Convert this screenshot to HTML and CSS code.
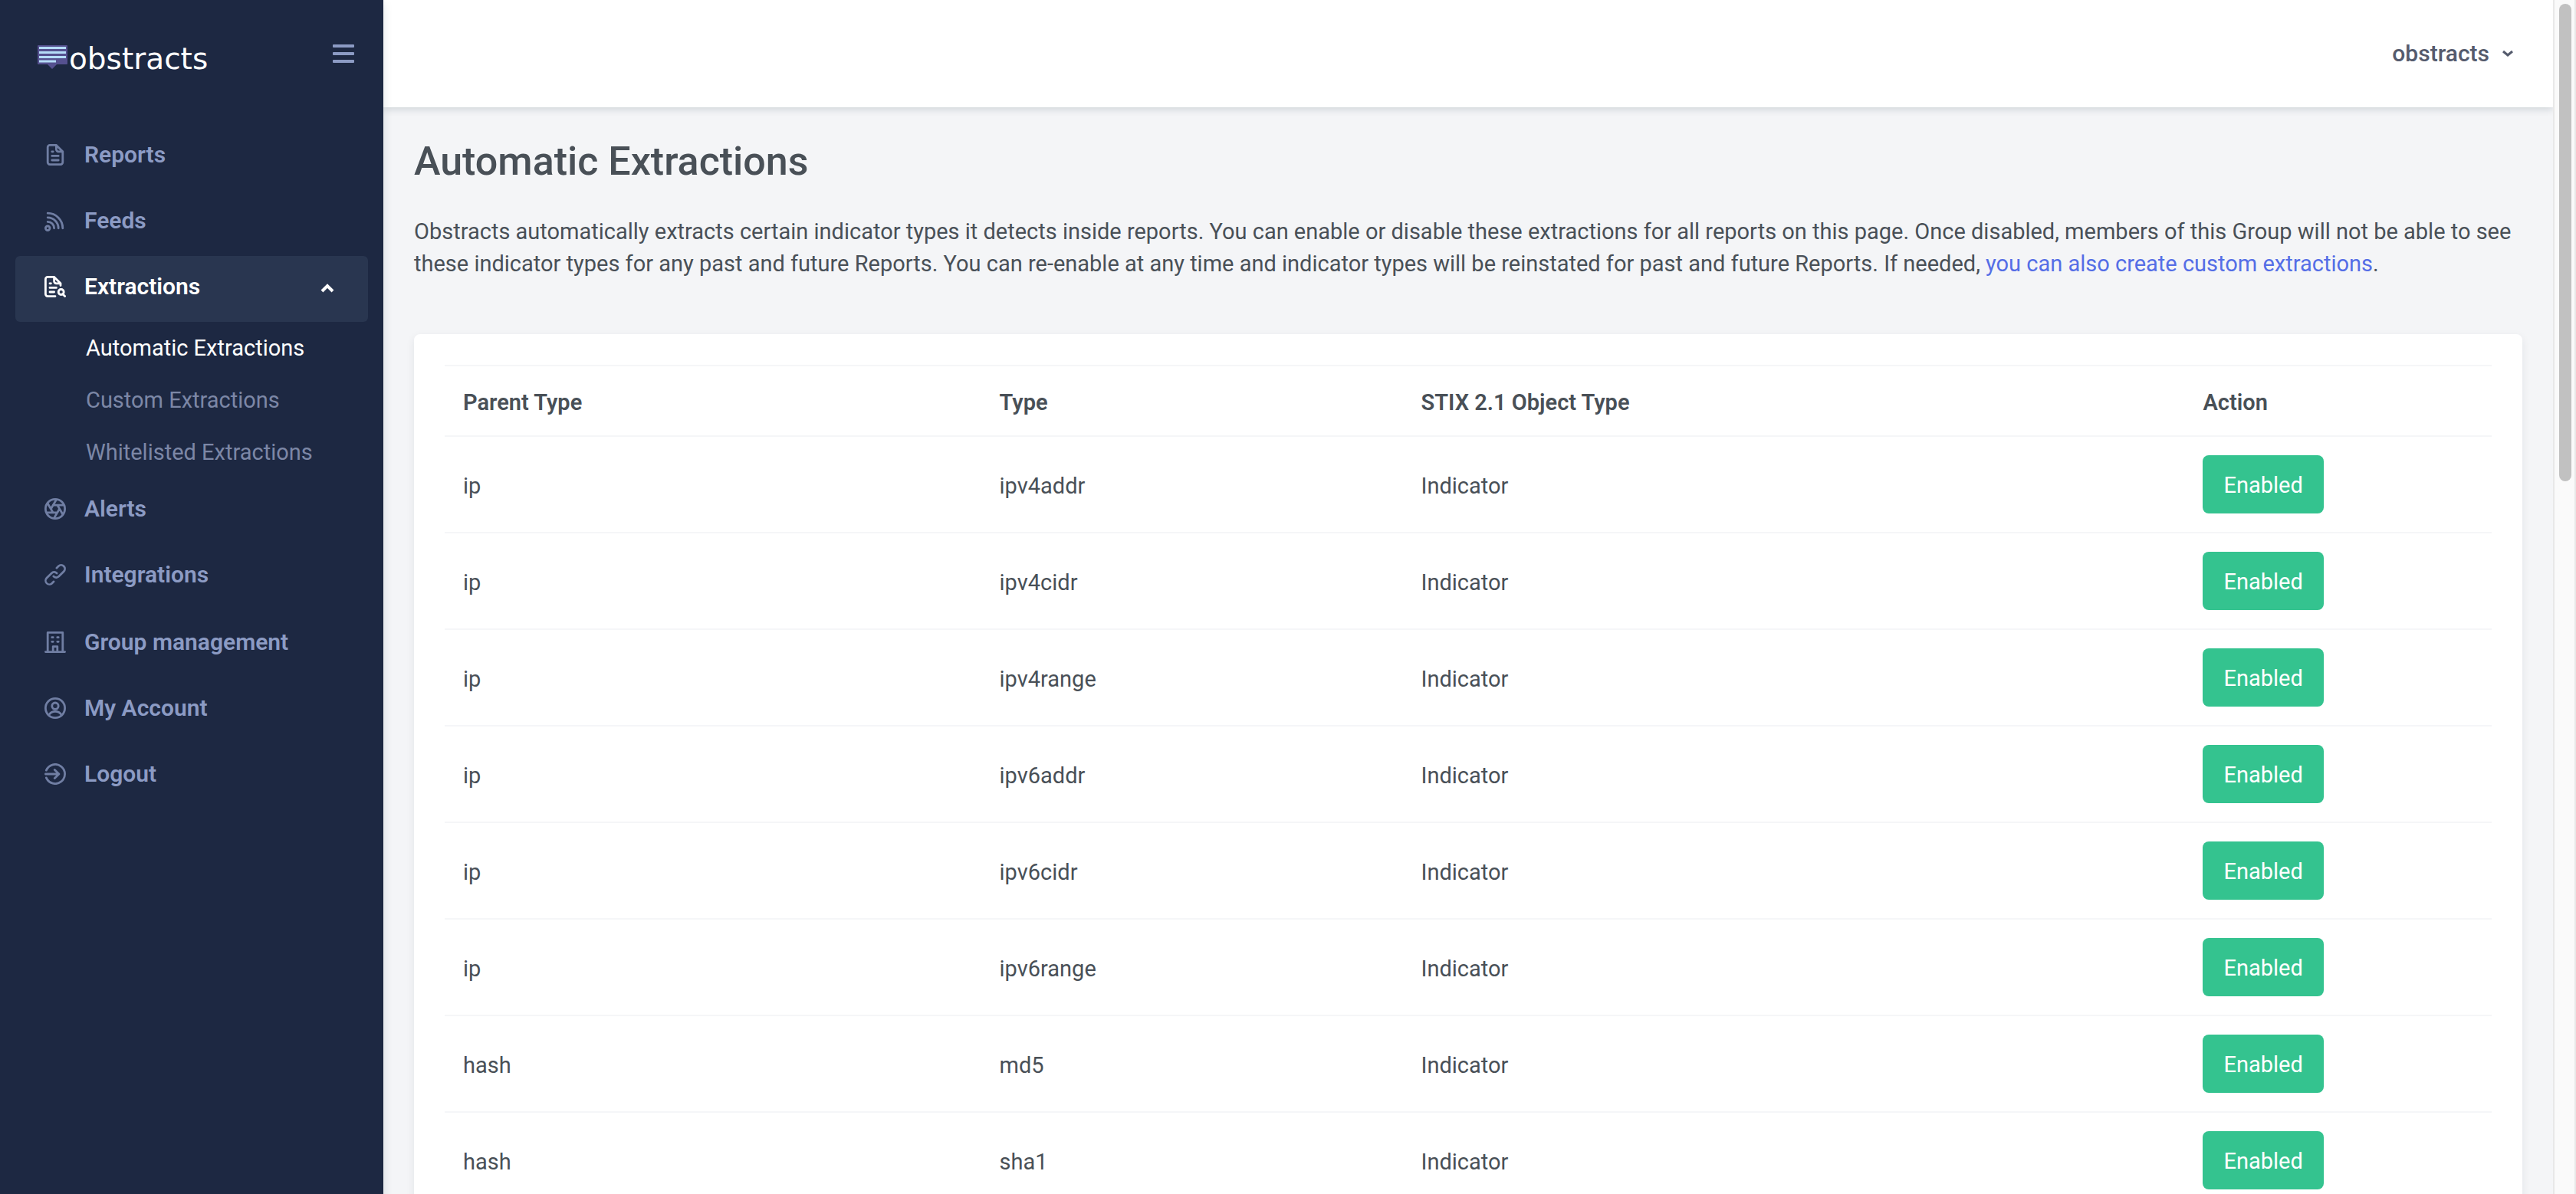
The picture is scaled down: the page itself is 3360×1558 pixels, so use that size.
FILE: index.html
```html
<!DOCTYPE html>
<html lang="en">
<head>
<meta charset="utf-8">
<title>Automatic Extractions - obstracts</title>
<meta name="viewport" content="width=device-width, initial-scale=1">
<link rel="stylesheet" href="styles.css">
</head>
<body>
<div class="shell">
  <aside class="sidebar">
    <div class="brand">
      <a class="logo" href="#">
        <svg class="logo-mark" viewBox="0 0 39 32" aria-hidden="true">
          <path d="M1 0h37a1 1 0 0 1 1 1v23a1 1 0 0 1-1 1H25l-6 6-6-6H1a1 1 0 0 1-1-1V1a1 1 0 0 1 1-1z" fill="#55508f"/>
          <path d="M2 3.500h35M2 9.500h35M2 15.500h35M2 21h22" stroke="#b5dcf7" stroke-width="3"/>
        </svg>
        <span class="logo-text">obstracts</span>
      </a>
      <button class="burger" type="button" aria-label="Toggle menu"><span></span><span></span><span></span></button>
    </div>
    <nav class="nav">
      <ul class="nav-group">
        <li><a class="nav-item" href="#">
          <svg class="icon" viewBox="2 2 20 20" aria-hidden="true"><path d="M7 3h6l6 6v10a2 2 0 0 1-2 2H7a2 2 0 0 1-2-2V5a2 2 0 0 1 2-2zM13 3v4a2 2 0 0 0 2 2h4M9 9h1M9 13h6M9 17h6"/></svg>
          <span>Reports</span></a></li>
        <li><a class="nav-item" href="#">
          <svg class="icon" viewBox="2 2 20 20" aria-hidden="true"><circle cx="5" cy="19" r="2"/><path d="M5 5a14 14 0 0 1 14 14M5 9a10 10 0 0 1 10 10M5 13a6 6 0 0 1 6 6"/></svg>
          <span>Feeds</span></a></li>
        <li><a class="nav-item active" href="#">
          <svg class="icon" viewBox="2 2 20 20" aria-hidden="true"><path d="M12 21H5a2 2 0 0 1-2-2V5a2 2 0 0 1 2-2h6l6 6v2M11 3v4a2 2 0 0 0 2 2h4M7 9h1M7 13h6M7 17h4M19 19l2 2"/><circle cx="17.500" cy="17" r="2.500"/></svg>
          <span>Extractions</span>
          <svg class="chevron" viewBox="0 0 18 12" aria-hidden="true"><path d="M2 10l7-7 7 7"/></svg></a>
          <ul class="subnav">
            <li><a class="current" href="#">Automatic Extractions</a></li>
            <li><a href="#">Custom Extractions</a></li>
            <li><a href="#">Whitelisted Extractions</a></li>
          </ul></li>
        <li><a class="nav-item" href="#">
          <svg class="icon" viewBox="2 2 20 20" aria-hidden="true"><circle cx="12" cy="12" r="9"/><path d="M14 8.500l5 8.500M10 8.500h9.500M8 12l5-8.500M10 15.500L5 7M14 15.500H4.500M16 12l-5 8.500"/></svg>
          <span>Alerts</span></a></li>
        <li><a class="nav-item" href="#">
          <svg class="icon solid" viewBox="2 2 20 20" aria-hidden="true"><path d="M10,17.550,8.230,19.270a2.470,2.470,0,0,1-3.500-3.500l4.540-4.550a2.460,2.460,0,0,1,3.390-.09l.12.1a1,1,0,0,0,1.400-1.430A2.750,2.750,0,0,0,14,9.590a4.460,4.460,0,0,0-6.090.22L3.310,14.360a4.480,4.480,0,0,0,6.330,6.330L11.370,19A1,1,0,0,0,10,17.550ZM20.690,3.310a4.490,4.490,0,0,0-6.330,0L12.630,5A1,1,0,0,0,14,6.450l1.730-1.720a2.470,2.470,0,0,1,3.500,3.500l-4.540,4.550a2.460,2.460,0,0,1-3.390.09l-.12-.1a1,1,0,0,0-1.400,1.430,2.750,2.750,0,0,0,.23.21,4.470,4.470,0,0,0,6.090-.22l4.550-4.550A4.490,4.490,0,0,0,20.690,3.310Z"/></svg>
          <span>Integrations</span></a></li>
      </ul>
      <ul class="nav-group">
        <li><a class="nav-item" href="#">
          <svg class="icon" viewBox="2 2 20 20" aria-hidden="true"><path d="M3 21h18M5 21V3h14v18M9 7.500h1M14 7.500h1M9 11.500h1M14 11.500h1M10 21v-5h4v5"/></svg>
          <span>Group management</span></a></li>
        <li><a class="nav-item" href="#">
          <svg class="icon" viewBox="2 2 20 20" aria-hidden="true"><circle cx="12" cy="12" r="9"/><circle cx="12" cy="10" r="3"/><path d="M6 18.500a7 7 0 0 1 12 0"/></svg>
          <span>My Account</span></a></li>
        <li><a class="nav-item" href="#">
          <svg class="icon" viewBox="2 2 20 20" aria-hidden="true"><path d="M3.700 8.500a9 9 0 1 1 0 7M3 12h12.500M11.500 8l4 4-4 4"/></svg>
          <span>Logout</span></a></li>
      </ul>
    </nav>
  </aside>

  <div class="page">
    <header class="topbar">
      <button class="user" type="button">obstracts
        <svg class="caret" viewBox="0 0 16 12" aria-hidden="true"><path d="M2 3l6 5 6-5"/></svg>
      </button>
    </header>
    <main class="content">
      <h1>Automatic Extractions</h1>
      <p class="intro">Obstracts automatically extracts certain indicator types it detects inside reports. You can enable or disable these extractions for all reports on this page. Once disabled, members of this Group will not be able to see these indicator types for any past and future Reports. You can re-enable at any time and indicator types will be reinstated for past and future Reports. If needed, <a href="#">you can also create custom extractions</a>.</p>
      <section class="card">
        <table>
          <colgroup><col class="col-parent"><col class="col-type"><col class="col-stix"><col class="col-action"></colgroup>
          <thead>
            <tr><th scope="col">Parent Type</th><th scope="col">Type</th><th scope="col">STIX 2.1 Object Type</th><th scope="col">Action</th></tr>
          </thead>
          <tbody>
            <tr><td>ip</td><td>ipv4addr</td><td>Indicator</td><td class="action"><button class="toggle" type="button">Enabled</button></td></tr>
            <tr><td>ip</td><td>ipv4cidr</td><td>Indicator</td><td class="action"><button class="toggle" type="button">Enabled</button></td></tr>
            <tr><td>ip</td><td>ipv4range</td><td>Indicator</td><td class="action"><button class="toggle" type="button">Enabled</button></td></tr>
            <tr><td>ip</td><td>ipv6addr</td><td>Indicator</td><td class="action"><button class="toggle" type="button">Enabled</button></td></tr>
            <tr><td>ip</td><td>ipv6cidr</td><td>Indicator</td><td class="action"><button class="toggle" type="button">Enabled</button></td></tr>
            <tr><td>ip</td><td>ipv6range</td><td>Indicator</td><td class="action"><button class="toggle" type="button">Enabled</button></td></tr>
            <tr><td>hash</td><td>md5</td><td>Indicator</td><td class="action"><button class="toggle" type="button">Enabled</button></td></tr>
            <tr><td>hash</td><td>sha1</td><td>Indicator</td><td class="action"><button class="toggle" type="button">Enabled</button></td></tr>
          </tbody>
        </table>
      </section>
    </main>
  </div>

  <div class="scrollbar" aria-hidden="true"><div class="thumb"></div></div>
</div>
</body>
</html>
```
FILE: styles.css
```css
* { box-sizing: border-box; }

body {
  margin: 0;
  background: #f4f5f7;
  color: #495057;
  font-family: Roboto, "Noto Sans", sans-serif;
  font-size: 29px;
  line-height: 42px;
}

ul { list-style: none; margin: 0; padding: 0; }
a { color: #556ee6; text-decoration: none; }
button { font: inherit; color: inherit; background: none; border: 0; padding: 0; cursor: pointer; }

.shell {
  display: grid;
  grid-template-columns: 500px minmax(0, 1fr) 30px;
  height: 100vh;
  overflow: hidden;
}

/* Sidebar */
.sidebar {
  z-index: 2;
  background: #1d2842;
  box-shadow: 0 4px 12px rgba(18, 38, 63, 0.12);
}

.brand {
  display: flex;
  align-items: center;
  justify-content: space-between;
  height: 140px;
  padding: 0 38px 0 49px;
}

.logo { display: flex; align-items: center; gap: 2px; color: #fff; }
.logo-mark { width: 39px; height: 32px; margin-top: 10px; }
.logo-text { margin-top: 14px; font-family: "DejaVu Sans", sans-serif; font-size: 39px; line-height: 48px; }

.burger { display: grid; gap: 6px; width: 28px; }
.burger span { height: 4px; border-radius: 1px; background: #8c9bc4; }

.nav { display: grid; gap: 2px; padding: 22px 20px; }

.nav-item {
  display: flex;
  align-items: center;
  gap: 24px;
  height: 86px;
  padding: 0 44px 6px 38px;
  border-radius: 6px;
  color: #8c9bc4;
  font-size: 30px;
  font-weight: 600;
}

.nav-item.active { background: #293650; color: #fff; }

.icon {
  width: 28px;
  height: 28px;
  fill: none;
  stroke: currentColor;
  stroke-width: 2;
  stroke-linecap: round;
  stroke-linejoin: round;
  opacity: 0.75;
}
.icon.solid { fill: currentColor; stroke: none; }
.active .icon { opacity: 1; }

.chevron {
  width: 18px;
  height: 12px;
  margin: 4px 0 0 auto;
  fill: none;
  stroke: currentColor;
  stroke-width: 4;
}

.subnav a { display: block; padding: 13px 0 13px 92px; color: #7c87a6; }
.subnav a.current { color: #fff; }

/* Page */
.page { display: flex; flex-direction: column; min-width: 0; }

.topbar {
  display: flex;
  flex: none;
  align-items: center;
  justify-content: flex-end;
  height: 140px;
  padding: 0 51px;
  background: #fff;
  box-shadow: 0 2px 10px rgba(18, 38, 63, 0.18);
}

.user { display: flex; align-items: center; gap: 16px; color: #555b6d; font-size: 30px; font-weight: 500; }
.caret { width: 16px; height: 12px; fill: none; stroke: currentColor; stroke-width: 3; }

.content { padding: 40px; }

h1 { margin: 0 0 39px; font-size: 52px; line-height: 62px; font-weight: 500; }
.intro { margin: 0 0 71px; }

.card {
  padding: 40px;
  border-radius: 8px;
  background: #fff;
  box-shadow: 0 4px 12px rgba(18, 38, 63, 0.08);
}

table { width: 100%; border-collapse: collapse; table-layout: fixed; }
.col-parent { width: 26.2%; }
.col-type { width: 20.6%; }
.col-stix { width: 38.2%; }
.col-action { width: 15%; }

th, td { padding: 26px 24px 22px; border-top: 2px solid #f5f6f8; text-align: left; vertical-align: middle; }
th { font-weight: 600; }
td.action { padding: 24px; }

.toggle {
  display: block;
  height: 76px;
  padding: 2px 27px 0;
  border-radius: 8px;
  background: #34c38f;
  color: #fff;
}

/* Scroll rail */
.scrollbar { padding: 5px 4px 5px 6px; border: solid #e8e8e8; border-width: 0 2px; background: #fafafa; }
.thumb { width: 16px; height: 40vh; border-radius: 8px; background: #c1c1c1; }
```
